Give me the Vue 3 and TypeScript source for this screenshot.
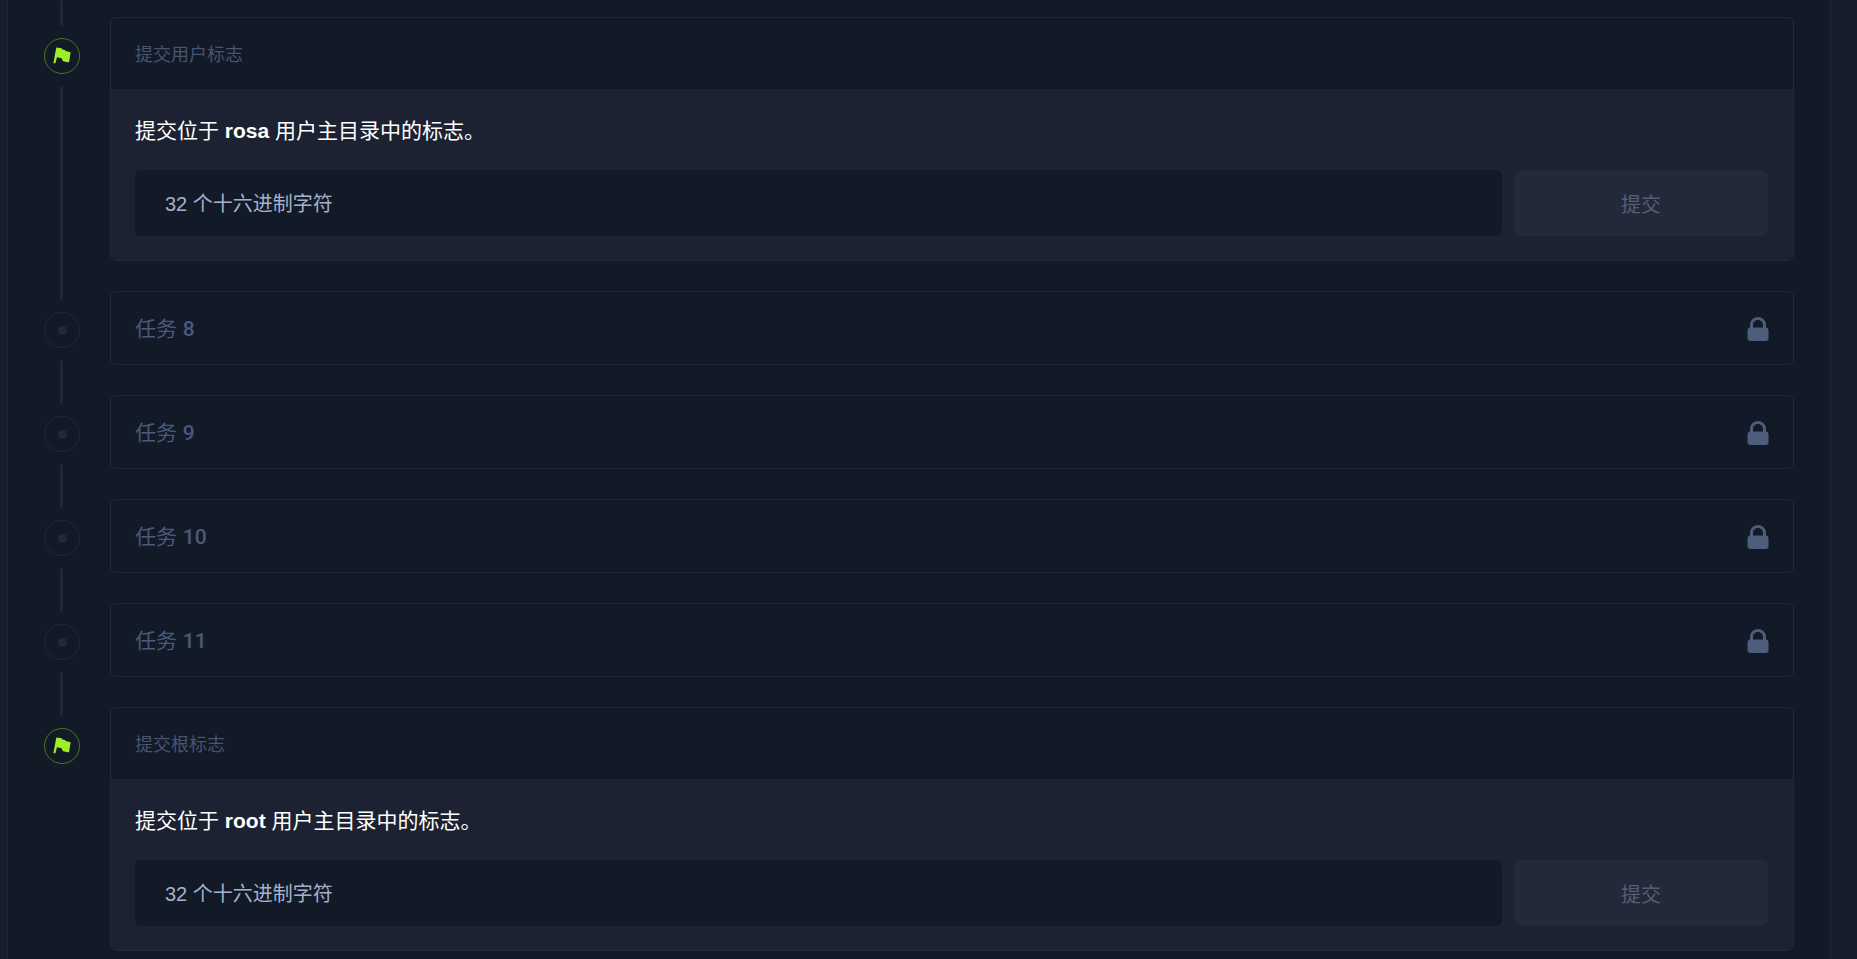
<script setup lang="ts">
import { reactive } from 'vue'

interface FlagStep {
  kind: 'flag'
  id: string
  title: string
  user: string
}
interface LockedStep {
  kind: 'locked'
  id: string
  number: number
}
type Step = FlagStep | LockedStep

const steps: Step[] = [
  { kind: 'flag', id: 'user-flag', title: '提交用户标志', user: 'rosa' },
  { kind: 'locked', id: 'task-8', number: 8 },
  { kind: 'locked', id: 'task-9', number: 9 },
  { kind: 'locked', id: 'task-10', number: 10 },
  { kind: 'locked', id: 'task-11', number: 11 },
  { kind: 'flag', id: 'root-flag', title: '提交根标志', user: 'root' },
]

const answers = reactive<Record<string, string>>({ 'user-flag': '', 'root-flag': '' })
</script>

<template>
  <main class="page">
    <section class="panel">
      <div class="lead line"></div>
      <ol class="steps">
        <li v-for="(step, i) in steps" :key="step.id" class="step">
          <div class="rail">
            <span class="node" :class="{ active: step.kind === 'flag' }">
              <svg v-if="step.kind === 'flag'" class="flag" viewBox="0 0 18 18" aria-hidden="true">
                <path d="M3.8.4 8.6 1.2 9.6 2.6 12 3 12.6 4 17.6 5.2 16.2 14.4Q15.8 15.6 14.6 15.3L10 14.2 8.6 11.2 4 10.2 2.4 16.2H.4L3.2 1Q3.4.4 3.8.4Z" />
              </svg>
              <span v-else class="dot"></span>
            </span>
            <span v-if="i < steps.length - 1" class="line"></span>
          </div>

          <form v-if="step.kind === 'flag'" class="card" @submit.prevent>
            <h2 class="card-title">{{ step.title }}</h2>
            <div class="card-body">
              <label class="prompt" :for="step.id">提交位于 <strong>{{ step.user }}</strong> 用户主目录中的标志。</label>
              <div class="fields">
                <input :id="step.id" v-model="answers[step.id]" class="answer" type="text" placeholder="32 个十六进制字符" />
                <button class="submit" type="submit" :disabled="!answers[step.id]">提交</button>
              </div>
            </div>
          </form>

          <article v-else class="card locked">
            <h2 class="task">任务 <span class="num">{{ step.number }}</span></h2>
            <svg class="lock" viewBox="0 0 22 24" aria-hidden="true">
              <path class="shackle" d="M4.5 12V7.7a6.5 6.2 0 0 1 13 0V12" />
              <rect x="0.5" y="10.5" width="21" height="13.5" rx="3" />
            </svg>
          </article>
        </li>
      </ol>
    </section>
  </main>
</template>

<style>
body {
  margin: 0;
  background: #171d2a;
}
</style>

<style scoped>
.page {
  box-sizing: border-box;
  min-height: 100vh;
  padding: 0 26px 0 7px;
  display: flex;
  background: #171d2a;
  font-family: "Liberation Sans", "Noto Sans CJK SC", sans-serif;
}
.panel {
  box-sizing: border-box;
  flex: 1;
  min-width: 0;
  padding: 0 36px;
  border: solid #222835;
  border-width: 0 1px;
  background: #131a27;
}
.line {
  width: 3px;
  margin-left: 16px;
  border-radius: 2px;
  background: #202636;
}
.lead {
  height: 26px;
  margin-bottom: -9px;
}
.steps {
  margin: 0;
  padding: 0;
  list-style: none;
}
.step {
  display: flex;
  gap: 30px;
  padding-bottom: 30px;
}
.step:last-child {
  padding-bottom: 8px;
}
.rail {
  flex: none;
  display: flex;
  flex-direction: column;
  width: 36px;
  padding-top: 21px;
  margin-bottom: -39px;
}
.step:last-child .rail {
  margin-bottom: 0;
}
.rail .line {
  flex: 1;
  margin-top: 12px;
}
.node {
  box-sizing: border-box;
  display: flex;
  align-items: center;
  justify-content: center;
  width: 36px;
  height: 36px;
  border: 1px solid #222835;
  border-radius: 50%;
}
.node.active {
  border-color: #4a7424;
}
.dot {
  width: 9px;
  height: 9px;
  border-radius: 50%;
  background: #222838;
}
.flag {
  width: 18px;
  height: 18px;
  fill: #9fef28;
}
.card {
  box-sizing: border-box;
  flex: 1;
  min-width: 0;
  overflow: hidden;
  border: 1px solid #222835;
  border-radius: 6px;
}
.card-title {
  margin: 0;
  padding: 4px 24px 0;
  font-size: 18px;
  font-weight: 400;
  line-height: 67px;
  color: #465570;
}
.card-body {
  padding: 24px 25px 24px 24px;
  background: #1c2231;
}
.prompt {
  display: block;
  margin-bottom: 21px;
  font-size: 21px;
  line-height: 36px;
  color: #fff;
}
.fields {
  display: flex;
  gap: 12px;
}
.answer,
.submit {
  box-sizing: border-box;
  height: 66px;
  border: 0;
  border-radius: 6px;
  font-family: inherit;
  font-size: 20px;
}
.answer {
  flex: 1;
  min-width: 0;
  padding: 2px 30px 0;
  outline: none;
  background: #131a27;
  color: #a4b1cd;
}
.answer::placeholder {
  color: #a4b1cd;
  opacity: 1;
}
.submit {
  flex: 0 0 254px;
  padding: 0;
  background: #232938;
  color: #535f76;
}
.locked {
  display: flex;
  align-items: center;
  justify-content: space-between;
  height: 74px;
  padding: 2px 24px 0;
}
.task {
  margin: 0;
  font-size: 21px;
  font-weight: 400;
  line-height: 36px;
  color: #495a7c;
}
.num {
  font-family: Roboto, sans-serif;
  font-weight: 500;
}
.lock {
  width: 22px;
  height: 24px;
  fill: #4d5d7b;
}
.lock .shackle {
  fill: none;
  stroke: #4d5d7b;
  stroke-width: 3;
}
</style>
